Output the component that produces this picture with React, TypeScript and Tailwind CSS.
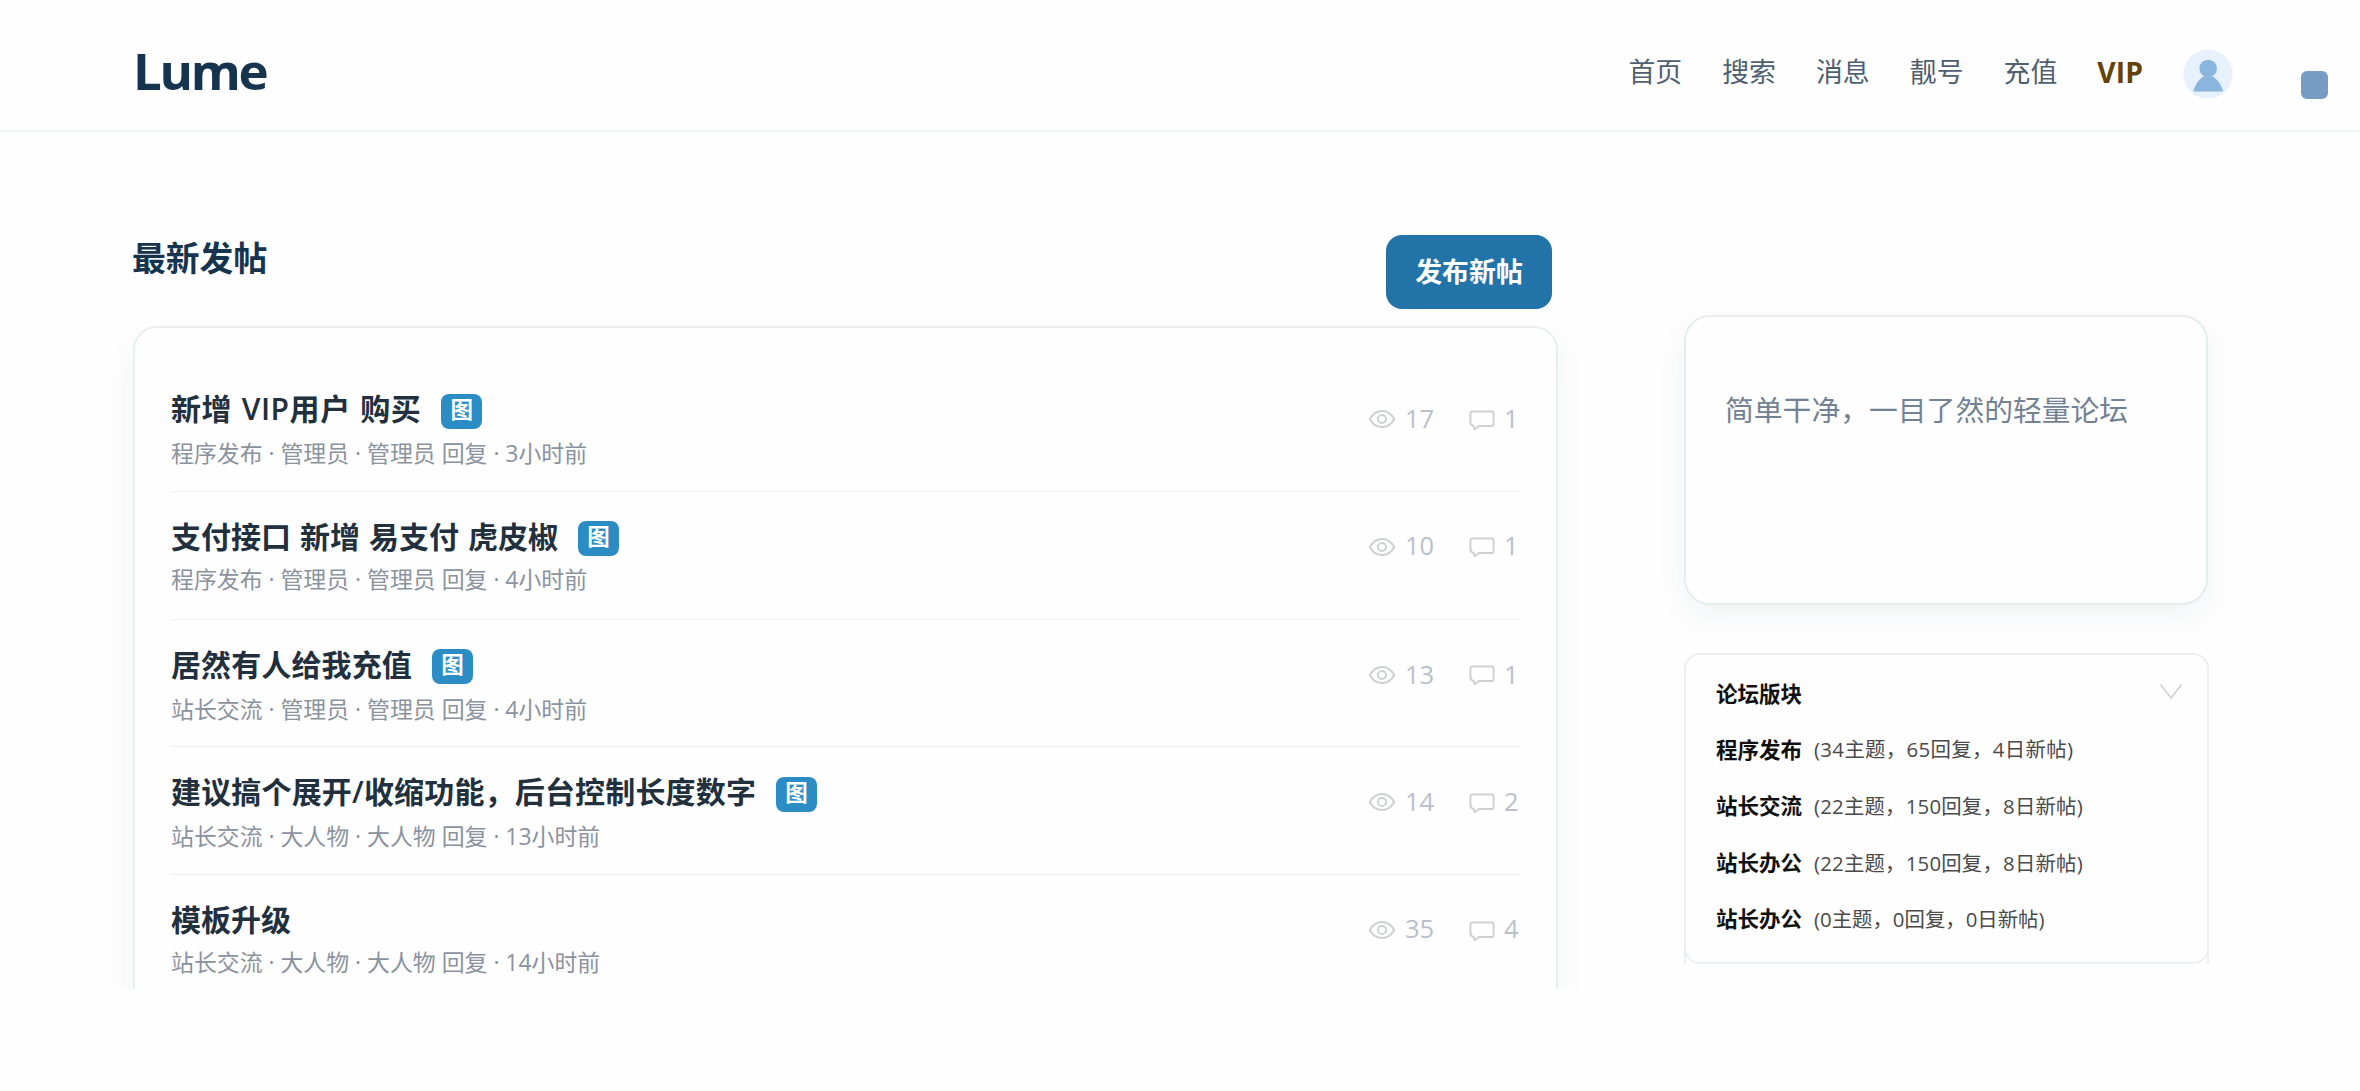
import React from 'react';

interface Post {
  title: string;
  hasImage: boolean;
  meta: string;
  views: number;
  replies: number;
  tight?: boolean;
  tracking?: string;
}

interface Board {
  name: string;
  detail: string;
  tracking: string;
}

const navItems = ['首页', '搜索', '消息', '靓号', '充值'];

const posts: Post[] = [
  { title: '新增 VIP用户 购买', hasImage: true, meta: '程序发布 · 管理员 · 管理员 回复 · 3小时前', views: 17, replies: 1, tracking: 'tracking-[0.55px]' },
  { title: '支付接口 新增 易支付 虎皮椒', hasImage: true, meta: '程序发布 · 管理员 · 管理员 回复 · 4小时前', views: 10, replies: 1, tight: true },
  { title: '居然有人给我充值', hasImage: true, meta: '站长交流 · 管理员 · 管理员 回复 · 4小时前', views: 13, replies: 1, tracking: 'tracking-[0.12px]' },
  { title: '建议搞个展开/收缩功能，后台控制长度数字', hasImage: true, meta: '站长交流 · 大人物 · 大人物 回复 · 13小时前', views: 14, replies: 2, tracking: 'tracking-[0.17px]' },
  { title: '模板升级', hasImage: false, meta: '站长交流 · 大人物 · 大人物 回复 · 14小时前', views: 35, replies: 4, tight: true },
];

const boards: Board[] = [
  { name: '程序发布', detail: '(34主题，65回复，4日新帖)', tracking: 'tracking-[0.35px]' },
  { name: '站长交流', detail: '(22主题，150回复，8日新帖)', tracking: 'tracking-[0.2px]' },
  { name: '站长办公', detail: '(22主题，150回复，8日新帖)', tracking: 'tracking-[0.2px]' },
  { name: '站长办公', detail: '(0主题，0回复，0日新帖)', tracking: 'tracking-normal' },
];

function EyeIcon() {
  return (
    <svg className="w-[28px] h-[20px]" viewBox="0 0 28 20" fill="none" stroke="#cdd1d4" strokeWidth="2">
      <path d="M1.8 10C4.6 4.6 9 1.9 14 1.9S23.4 4.6 26.2 10C23.4 15.4 19 18.1 14 18.1S4.6 15.4 1.8 10Z" strokeLinejoin="round" />
      <circle cx="14" cy="10" r="4.1" />
    </svg>
  );
}

function CommentIcon() {
  return (
    <svg className="w-[26px] h-[21px]" viewBox="0 0 26 21" fill="none" stroke="#cdd1d4" strokeWidth="2" strokeLinejoin="round">
      <path d="M3.6 1.6H22.4Q24.6 1.6 24.6 3.8V13.8Q24.6 16 22.4 16H10.2L5.6 19.2L4.6 16Q1.4 15.2 1.4 12.2V3.8Q1.4 1.6 3.6 1.6Z" />
    </svg>
  );
}

function Avatar() {
  return (
    <svg className="w-[50px] h-[50px]" viewBox="0 0 50 50">
      <circle cx="25" cy="25" r="24.6" fill="#e6f1fc" />
      <circle cx="25.2" cy="19.5" r="8.8" fill="#8ab6de" />
      <path d="M10.2 42.5C12.2 36 15.6 30.6 20.4 27.6H30C34.8 30.6 38.2 36 40.2 42.5Z" fill="#8ab6de" />
    </svg>
  );
}

function PostRow({ post }: { post: Post }) {
  return (
    <li className="flex justify-between h-[127.8px] pt-[25px] border-b border-[#edf0f1]">
      <div>
        <div className="flex items-center h-10">
          <span className={`text-[30px] leading-10 font-semibold text-[#22303e] whitespace-pre [word-spacing:1.2px] ${post.tracking ?? ''}`}>
            {post.title}
          </span>
          {post.hasImage && (
            <span className="mt-[4px] ml-[20px] w-[41px] h-[35px] rounded-lg bg-[#2c8dc5] text-white text-[22.5px] leading-[32px] font-bold text-center">
              图
            </span>
          )}
        </div>
        <div className={post.tight ? 'mt-[8px]' : 'mt-[10px]'}>
          <p className="text-[22.9px] leading-[30px] text-[#8a929e] whitespace-pre">{post.meta}</p>
        </div>
      </div>
      <div className="flex items-center h-10 mt-[10px] text-[25.5px] leading-10 text-[#b9c0cb]">
        <EyeIcon />
        <span className={post.tight ? 'ml-[9px] w-[30px] -mt-[4px]' : 'ml-[9px] w-[30px] -mt-[2px]'}>{post.views}</span>
        <span className="ml-[34px] mt-[2px] flex">
          <CommentIcon />
        </span>
        <span className={post.tight ? 'ml-[9px] w-[15px] -mt-[4px]' : 'ml-[9px] w-[15px] -mt-[2px]'}>{post.replies}</span>
      </div>
    </li>
  );
}

export default function App() {
  return (
    <div className="w-[2360px] h-[1091px] overflow-hidden bg-[#fefefe] font-['Open_Sans','Noto_Sans_CJK_SC',sans-serif]">
      <header className="flex items-center h-[132px] pl-[133px] pr-8 border-b-2 border-[#f2f5f6]">
        <h1 className="text-[51px] leading-[60px] mt-[9px] font-bold tracking-[-2.3px] text-[#17344f]">Lume</h1>
        <nav className="ml-auto mt-[13px] flex items-center gap-10 text-[26.9px] leading-10 text-[#4f5f70]">
          {navItems.map((item) => (
            <a key={item}>{item}</a>
          ))}
          <a className="text-[28.4px] font-bold text-[#644208]">VIP</a>
        </nav>
        <div className="ml-[40px] mt-[17px] h-[50px]">
          <Avatar />
        </div>
        <div className="ml-[68px] mt-[40px] w-[27px] h-7 rounded-md bg-[#769cc3]" />
      </header>

      <main className="flex items-start pl-[133px]">
        <section className="w-[1425px]">
          <div className="flex justify-between items-start h-[194px] pt-[103px] pr-[6px]">
            <h2 className="-mt-px -ml-px text-[33.8px] leading-[48px] font-bold text-[#17344f]">最新发帖</h2>
            <button className="w-[166px] h-[74px] rounded-2xl bg-[#2273a8] text-white text-[26.9px] leading-[74px] font-bold">
              发布新帖
            </button>
          </div>
          {/* the list runs past the fold, so only its upper part shows */}
          <div className="h-[663px] -mx-10 px-10 overflow-hidden">
            <ul className="h-[800px] pt-[36px] pl-[36px] pr-[37px] rounded-3xl border-2 border-[#e9eff1] bg-[#fefefe] shadow-[0_12px_30px_rgba(30,60,80,0.05)]">
              {posts.map((post) => (
                <PostRow key={post.title} post={post} />
              ))}
            </ul>
          </div>
        </section>

        <aside className="ml-[126px] w-[524px] pt-[183px]">
          <div className="h-[290px] pt-[69px] pl-[39px] rounded-[26px] border-2 border-[#e6edef] bg-[#fefefe] shadow-[0_12px_30px_rgba(30,60,80,0.06)]">
            <p className="text-[28.8px] leading-[48px] text-[#738293] whitespace-nowrap">简单干净，一目了然的轻量论坛</p>
          </div>
          <div className="mt-[48px] w-[525px] h-[311px] rounded-t-2xl border-x-2 border-[#eceff0]">
            <div className="-mx-[2px] h-[311px] pt-[19px] px-[30px] rounded-2xl border-2 border-[#eceff0] bg-[#fefefe]">
              <div className="flex items-center justify-between h-[40px] mb-[7.5px] pr-[24px]">
                <h3 className="text-[21.5px] leading-10 font-bold text-[#111]">论坛版块</h3>
                <svg className="w-6 h-[18px] mt-[-4px] -mr-[30px]" viewBox="0 0 24 18" fill="none" stroke="#cfd0d0" strokeWidth="1.5">
                  <path d="M1.5 1.5L12 15L22.5 1.5" />
                </svg>
              </div>
              {boards.map((board, i) => (
                <div key={i} className="flex items-center h-[56.6px] whitespace-nowrap">
                  <span className="w-[98px] text-[21.5px] font-bold text-[#111]">{board.name}</span>
                  <span className={`text-[20.4px] text-[#4a4a4a] ${board.tracking}`}>{board.detail}</span>
                </div>
              ))}
            </div>
          </div>
        </aside>
      </main>
    </div>
  );
}
